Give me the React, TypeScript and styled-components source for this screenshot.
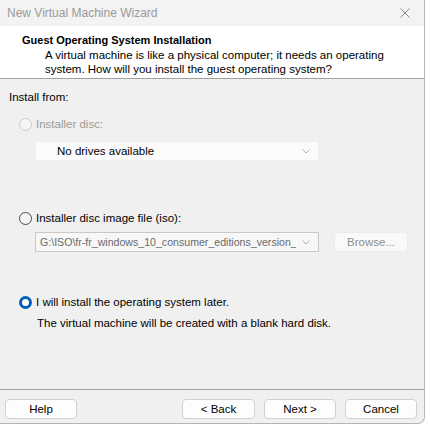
import React from "react";
import styled, { createGlobalStyle } from "styled-components";

const GlobalStyle = createGlobalStyle`
  html, body {
    margin: 0;
    padding: 0;
    background: #ffffff;
  }
  body {
    font-family: "Liberation Sans", Arial, sans-serif;
    font-size: 11.5px;
    color: #000;
  }
`;

const Window = styled.div`
  width: 424px;
  height: 423px;
  background: #f0f0f0;
  border-right: 1px solid #b5b5b5;
  border-bottom: 1px solid #b5b5b5;
  border-bottom-right-radius: 7px;
  display: flex;
  flex-direction: column;
  overflow: hidden;
`;

const TitleBar = styled.div`
  height: 26px;
  flex: none;
  display: flex;
  align-items: center;
  justify-content: space-between;
  padding: 0 14px 0 7px;
  background: #f3f3f3;
  color: #9a9a9a;
  font-size: 12px;
`;

const CloseIcon = styled.svg`
  width: 10px;
  height: 10px;
  stroke: #8a8a8a;
  stroke-width: 1;
`;

const Header = styled.div`
  background: #ffffff;
  height: 53px;
  flex: none;
  padding: 7px 0 0 22px;
  box-sizing: border-box;
  border-bottom: 1px solid #a0a0a0;
`;

const HeaderTitle = styled.div`
  font-weight: 700;
  font-size: 11px;
  line-height: 15px;
`;

const HeaderText = styled.div`
  padding-left: 23px;
  line-height: 14px;
  white-space: nowrap;
`;

const Body = styled.div`
  flex: 1;
  display: flex;
  flex-direction: column;
  padding: 11px 0 0 9px;
`;

const Label = styled.div`
  line-height: 14px;
`;

const Option = styled.div<{ $top: number }>`
  margin-top: ${(p) => p.$top}px;
  padding-left: 10px;
  display: flex;
  align-items: center;
  gap: 4px;
  line-height: 14px;
`;

const Radio = styled.span<{ $state: "disabled" | "off" | "on" }>`
  width: ${(p) => (p.$state === "on" ? 7 : 11)}px;
  height: ${(p) => (p.$state === "on" ? 7 : 11)}px;
  border-radius: 50%;
  flex: none;
  background: ${(p) => (p.$state === "on" ? "#ffffff" : "#f5f5f5")};
  border: ${(p) =>
    p.$state === "on"
      ? "3px solid #005fb8"
      : p.$state === "off"
      ? "1px solid #4a4a4a"
      : "1px solid #c9c9c9"};
`;

const OptionText = styled.span<{ $muted?: boolean }>`
  color: ${(p) => (p.$muted ? "#9b9b9b" : "#000")};
`;

const FieldRow = styled.div<{ $top: number }>`
  margin-top: ${(p) => p.$top}px;
  padding-left: 26px;
  display: flex;
  align-items: center;
  gap: 15px;
`;

const Combo = styled.div<{ $framed?: boolean }>`
  width: 284px;
  height: 20px;
  flex: none;
  box-sizing: border-box;
  display: flex;
  align-items: center;
  padding: 0 8px 0 ${(p) => (p.$framed ? 4 : 21)}px;
  background: ${(p) => (p.$framed ? "#f7f7f7" : "#fbfbfb")};
  border: 1px solid ${(p) => (p.$framed ? "#c8c8c8" : "#f0f0f0")};
  color: ${(p) => (p.$framed ? "#6a6a6a" : "#000")};
  font-size: ${(p) => (p.$framed ? 10.6 : 11.5)}px;
  white-space: nowrap;
  overflow: hidden;
`;

const ComboText = styled.span`
  flex: 1;
  min-width: 0;
  overflow: hidden;
`;

const Chevron = styled.svg`
  width: 8px;
  height: 5px;
  flex: none;
  margin-left: 6px;
  stroke: #b0b0b0;
  stroke-width: 1;
  fill: none;
`;

const Button = styled.button<{ $disabled?: boolean; $width?: number }>`
  width: ${(p) => p.$width ?? 73}px;
  height: 20px;
  flex: none;
  padding: 0;
  box-sizing: border-box;
  border-radius: 4px;
  border: 1px solid ${(p) => (p.$disabled ? "#ececec" : "#d0d0d0")};
  background: ${(p) => (p.$disabled ? "#f9f9f9" : "#fdfdfd")};
  color: ${(p) => (p.$disabled ? "#8f8f8f" : "#000")};
  font-family: "Liberation Sans", Arial, sans-serif;
  font-size: 11.5px;
  line-height: 18px;
`;

const Note = styled.div`
  margin-top: 7px;
  padding-left: 28px;
  line-height: 14px;
`;

const Footer = styled.div`
  border-top: 1px solid #a0a0a0;
  height: 34px;
  flex: none;
  box-sizing: border-box;
  padding: 9px 0 0 5px;
  display: flex;
  align-items: flex-start;
`;

const NavGroup = styled.div`
  margin-left: auto;
  margin-right: 7px;
  display: flex;
  gap: 9px;
`;

const ChevronDown = () => (
  <Chevron viewBox="0 0 8 5">
    <path d="M0.5 0.5 L4 4 L7.5 0.5" />
  </Chevron>
);

export default function App() {
  return (
    <>
      <GlobalStyle />
      <Window>
        <TitleBar>
          <span>New Virtual Machine Wizard</span>
          <CloseIcon viewBox="0 0 10 10">
            <path d="M0.5 0.5 L9.5 9.5 M9.5 0.5 L0.5 9.5" />
          </CloseIcon>
        </TitleBar>
        <Header>
          <HeaderTitle>Guest Operating System Installation</HeaderTitle>
          <HeaderText>
            A virtual machine is like a physical computer; it needs an operating
            <br />
            system. How will you install the guest operating system?
          </HeaderText>
        </Header>
        <Body>
          <Label>Install from:</Label>
          <Option $top={13}>
            <Radio $state="disabled" />
            <OptionText $muted>Installer disc:</OptionText>
          </Option>
          <FieldRow $top={10}>
            <Combo>
              <ComboText>No drives available</ComboText>
              <ChevronDown />
            </Combo>
          </FieldRow>
          <Option $top={50}>
            <Radio $state="off" />
            <OptionText>Installer disc image file (iso):</OptionText>
          </Option>
          <FieldRow $top={7}>
            <Combo $framed>
              <ComboText>G:\ISO\fr-fr_windows_10_consumer_editions_version_</ComboText>
              <ChevronDown />
            </Combo>
            <Button $disabled $width={74}>Browse...</Button>
          </FieldRow>
          <Option $top={43}>
            <Radio $state="on" />
            <OptionText>I will install the operating system later.</OptionText>
          </Option>
          <Note>The virtual machine will be created with a blank hard disk.</Note>
        </Body>
        <Footer>
          <Button $width={72}>Help</Button>
          <NavGroup>
            <Button>&lt; Back</Button>
            <Button $width={72}>Next &gt;</Button>
            <Button $width={72}>Cancel</Button>
          </NavGroup>
        </Footer>
      </Window>
    </>
  );
}
